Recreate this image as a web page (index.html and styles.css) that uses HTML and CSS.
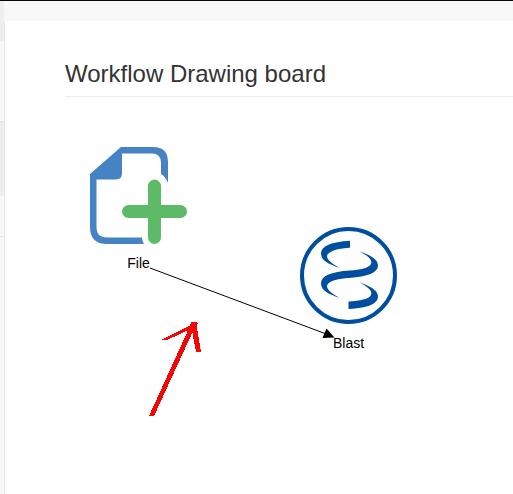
FILE: index.html
```
<!DOCTYPE html>
<html lang="en">
<head>
<meta charset="utf-8">
<title>Workflow Drawing board</title>
<link rel="stylesheet" href="styles.css">
</head>
<body>
<div class="app">
  <aside class="sidebar">
    <div class="item item-first"></div>
    <div class="item item-plain"></div>
    <div class="item item-active"></div>
    <div class="item item-last"></div>
  </aside>
  <div class="main">
    <header class="topbar"></header>
    <main class="page">
      <h1 class="title">Workflow Drawing board</h1>
    </main>
  </div>
</div>
<svg class="edges" width="513" height="494" viewBox="0 0 513 494">
  <path d="M150 268L325 333.5" stroke="#000" stroke-width="1" fill="none"/>
  <path d="M334.5 337.5L326.5 328.5L322.5 338Z" fill="#000"/>
  <g fill="#f50606" shape-rendering="crispEdges">
    <path d="M149 416L189.500 327L194 329L154 416Z"/>
    <path d="M161 340L190 325.500L191 322H196L198 324L193 328L167 340Z"/>
    <path d="M191 322H196L201 352H196L191.500 328Z"/>
  </g>
</svg>
<div class="node node-file">
  <svg class="icon" width="97" height="97" viewBox="0 0 97 97">
    <path fill="#4583c5" fill-rule="evenodd" d="M31 0H63Q78 0 78 15V36Q75 29 71 27V16Q71 6.5 62 6.5H32V26Q32 32.5 26 32.5H6.5V80Q6.5 90.5 17 90.5H52Q52 94 54 97H17Q0 97 0 80V27Z"/>
    <path stroke="#5dbb67" stroke-width="13" stroke-linecap="round" d="M64.5 39V90.5M38.5 64.5H90.5"/>
  </svg>
  <span class="label">File</span>
</div>
<div class="node node-blast">
  <svg class="icon" width="97" height="97" viewBox="0 0 97 97">
    <circle cx="48.5" cy="48.5" r="46.5" fill="none" stroke="#004f9e" stroke-width="4"/>
    <g fill="#004f9e">
      <path d="M50 13.700V20.700C40 21.300 30 23.500 27.500 27.500C25.500 32 31 36 39 40.700C31 38 25 35 22.500 31.500C17 21 27 15 50 13.700Z"/>
      <path d="M59 24C67 27 73.500 30 76.500 34C82 43.500 72 49.500 49 51C39 51.700 30 53.500 27.500 57.500C25.500 62 31 66 39 70.700C31 68 25 65 22.500 61.500C17 51 27 45 50 43.500C60 42.800 69 41 71 37C73 32.500 67 28.500 59 24Z"/>
      <path d="M59 55C67 58 73.500 61 76.500 65C82 74.500 72 81 48.500 82V74.500C60 74 69 72 71 68C73 63.500 67 59.500 59 55Z"/>
    </g>
  </svg>
  <span class="label">Blast</span>
</div>
</body>
</html>
```
FILE: styles.css
```
* { box-sizing: border-box; }
body {
  margin: 0;
  height: 494px;
  overflow: hidden;
  background: #fff;
  font-family: "Liberation Sans", Arial, sans-serif;
}
.app {
  display: flex;
  height: 494px;
  border-top: 1px solid #080808;
  background: #f8f8f8;
}
.sidebar { width: 4px; }
.item { border-bottom: 1px solid #e7e7e7; }
.item-first { height: 40px; background: #eee; border: 0; }
.item-plain { height: 81px; }
.item-active { height: 74px; background: #eee; border: 0; }
.item-last { height: 41px; }
.main { flex: 1; display: flex; flex-direction: column; }
.topbar { height: 20px; }
.page {
  flex: 1;
  padding: 37px 0 0 60px;
  border-left: 1px solid #e7e7e7;
  background: #fff;
}
.title {
  margin: 0;
  height: 39px;
  border-bottom: 1px solid #eee;
  color: #333;
  font-size: 24px;
  font-weight: 400;
  line-height: 32px;
}
.edges { position: absolute; left: 0; top: 0; }
.node {
  position: absolute;
  width: 97px;
  display: flex;
  flex-direction: column;
  align-items: center;
}
.node-file { left: 90px; top: 147px; }
.node-blast { left: 300px; top: 227px; }
.icon { display: block; }
.label {
  margin-top: 11px;
  color: #000;
  font-size: 14px;
  line-height: 16px;
}
```
